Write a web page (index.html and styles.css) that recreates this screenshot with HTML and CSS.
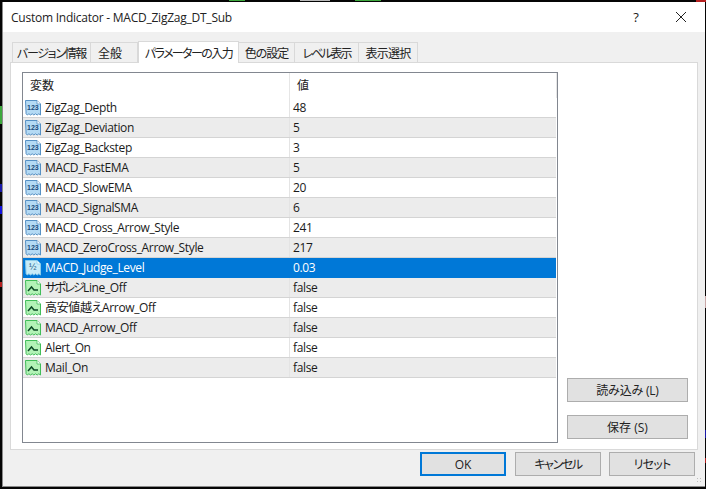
FILE: index.html
```html
<!DOCTYPE html>
<html lang="ja">
<head>
<meta charset="utf-8">
<title>Custom Indicator</title>
<link rel="stylesheet" href="styles.css">
</head>
<body>
<svg class="defs" width="0" height="0">
  <defs>
    <symbol id="doc" viewBox="0 0 16 16">
      <path class="sheet" d="M.5 .5h11.500l3.500 3.500v11l-1.700-1.200-1.600 1.200-1.700-1.200-1.600 1.200-1.700-1.200-1.600 1.200-1.700-1.200-1.600 1.200-1.200-1.200z"/>
      <path class="fold" d="M12 .5v3.500h3.500"/>
    </symbol>
  </defs>
</svg>
<main class="dialog">
  <header class="titlebar">
    <span class="title">Custom Indicator - MACD_ZigZag_DT_Sub</span>
    <span class="help">?</span>
    <svg class="close" viewBox="0 0 12 12" width="12" height="12"><path d="M1 1l10 10M11 1L1 11" stroke="#222" stroke-width="1" fill="none"/></svg>
  </header>
  <div class="body">
    <nav class="tabs">
      <span class="tab t1">バージョン情報</span>
      <span class="tab t2">全般</span>
      <span class="tab t3 active">パラメーターの入力</span>
      <span class="tab t4">色の設定</span>
      <span class="tab t5">レベル表示</span>
      <span class="tab t6">表示選択</span>
    </nav>
    <section class="panel">
      <div class="list">
        <div class="row head"><span class="c1">変数</span><span class="c2">値</span></div>
        <div class="row"><span class="c1"><svg class="ic num"><use href="#doc"/></svg><b class="tag">123</b>ZigZag_Depth</span><span class="c2">48</span></div>
        <div class="row alt"><span class="c1"><svg class="ic num"><use href="#doc"/></svg><b class="tag">123</b>ZigZag_Deviation</span><span class="c2">5</span></div>
        <div class="row"><span class="c1"><svg class="ic num"><use href="#doc"/></svg><b class="tag">123</b>ZigZag_Backstep</span><span class="c2">3</span></div>
        <div class="row alt"><span class="c1"><svg class="ic num"><use href="#doc"/></svg><b class="tag">123</b>MACD_FastEMA</span><span class="c2">5</span></div>
        <div class="row"><span class="c1"><svg class="ic num"><use href="#doc"/></svg><b class="tag">123</b>MACD_SlowEMA</span><span class="c2">20</span></div>
        <div class="row alt"><span class="c1"><svg class="ic num"><use href="#doc"/></svg><b class="tag">123</b>MACD_SignalSMA</span><span class="c2">6</span></div>
        <div class="row"><span class="c1"><svg class="ic num"><use href="#doc"/></svg><b class="tag">123</b>MACD_Cross_Arrow_Style</span><span class="c2">241</span></div>
        <div class="row alt"><span class="c1"><svg class="ic num"><use href="#doc"/></svg><b class="tag">123</b>MACD_ZeroCross_Arrow_Style</span><span class="c2">217</span></div>
        <div class="row sel"><span class="c1"><svg class="ic dbl"><use href="#doc"/></svg><b class="tag half">½</b>MACD_Judge_Level</span><span class="c2">0.03</span></div>
        <div class="row alt"><span class="c1"><svg class="ic bool" viewBox="0 0 16 16"><use href="#doc"/><path class="tick" d="M3 11l3.500-4 2.500 3h4"/></svg><span class="kana">サポレジ</span>Line_Off</span><span class="c2">false</span></div>
        <div class="row"><span class="c1"><svg class="ic bool" viewBox="0 0 16 16"><use href="#doc"/><path class="tick" d="M3 11l3.500-4 2.500 3h4"/></svg>高安値越えArrow_Off</span><span class="c2">false</span></div>
        <div class="row alt"><span class="c1"><svg class="ic bool" viewBox="0 0 16 16"><use href="#doc"/><path class="tick" d="M3 11l3.500-4 2.500 3h4"/></svg>MACD_Arrow_Off</span><span class="c2">false</span></div>
        <div class="row"><span class="c1"><svg class="ic bool" viewBox="0 0 16 16"><use href="#doc"/><path class="tick" d="M3 11l3.500-4 2.500 3h4"/></svg>Alert_On</span><span class="c2">false</span></div>
        <div class="row alt"><span class="c1"><svg class="ic bool" viewBox="0 0 16 16"><use href="#doc"/><path class="tick" d="M3 11l3.500-4 2.500 3h4"/></svg>Mail_On</span><span class="c2">false</span></div>
      </div>
      <div class="side">
        <button class="btn side-btn load">読み込み (L)</button>
        <button class="btn side-btn">保存 (S)</button>
      </div>
    </section>
    <footer class="actions">
      <button class="btn foot primary">OK</button>
      <button class="btn foot cancel">キャンセル</button>
      <button class="btn foot reset">リセット</button>
    </footer>
    <span class="grip"></span>
  </div>
</main>
</body>
</html>
```

FILE: styles.css
```css
* { box-sizing: border-box; }
html, body { margin: 0; height: 100%; }
body {
  width: 706px;
  height: 489px;
  overflow: hidden;
  background-color: #050505;
  background-repeat: no-repeat;
  background-image:
    linear-gradient(#3da83d, #3da83d), linear-gradient(#3da83d, #3da83d),
    linear-gradient(#3da83d, #3da83d), linear-gradient(#b9b9b9, #b9b9b9),
    linear-gradient(#b52020, #b52020), linear-gradient(#1a1aa8, #1a1aa8),
    linear-gradient(#1414e0, #1414e0), linear-gradient(#b52020, #b52020),
    linear-gradient(#c9a8a8, #c9a8a8), linear-gradient(#1a1aa8, #1a1aa8),
    linear-gradient(#b52020, #b52020);
  background-size:
    16px 1px, 26px 1px, 2px 18px, 30px 1px,
    10px 2px, 2px 8px,
    2px 8px, 2px 5px,
    1px 12px, 1px 8px, 1px 5px;
  background-position:
    229px 0, 355px 0, 0 106px, 300px 0,
    696px 0, 0 184px,
    0 206px, 0 282px,
    705px 296px, 705px 430px, 705px 458px;
  padding: 2px 1px 2px 2px;
  font-family: "Open Sans", "Noto Sans CJK JP", sans-serif;
  font-feature-settings: "palt";
  font-size: 12px;
  color: #1a1a1a;
}
.defs { position: absolute; }
.dialog {
  width: 703px;
  height: 485px;
  background: #f0f0f0;
  border-left: 1px solid #8a8a8a;
  border-bottom: 1px solid #8a8a8a;
  display: flex;
  flex-direction: column;
}
.titlebar {
  height: 30px;
  flex: none;
  background: #fff;
  display: flex;
  align-items: center;
  padding-left: 8px;
}
.title { font-size: 12px; flex: 1; color: #222; letter-spacing: -0.24px; }
.help { font-size: 13px; width: 12px; margin-right: 33px; text-align: center; }
.close { margin-right: 18px; }
.body { flex: 1; display: flex; flex-direction: column; padding: 8px 0 0 7px; position: relative; }
.tabs { display: flex; height: 22px; align-items: flex-end; padding-left: 2px; flex: none; }
.tab {
  height: 20px;
  background: #f0f0f0;
  border: 1px solid #d9d9d9;
  border-bottom: 0;
  border-left: 0;
  display: flex;
  align-items: center;
  justify-content: center;
  font-size: 12px;
  color: #222;
  white-space: nowrap;
}
.t1 { width: 79px; border-left: 1px solid #d9d9d9; letter-spacing: -1.3px; }
.t2 { width: 47px; padding-right: 8px; }
.t3 { width: 101px; letter-spacing: -1.6px; }
.t4 { width: 56px; letter-spacing: -1px; }
.t5 { width: 64px; letter-spacing: -2px; }
.t6 { width: 59px; letter-spacing: -0.7px; }
.tab.active { height: 22px; background: #fff; margin-bottom: -1px; z-index: 1; border-left: 1px solid #d9d9d9; }
.panel {
  width: 688px;
  height: 388px;
  background: #fff;
  border: 1px solid #d9d9d9;
  padding: 9px 9px 6px 11px;
  display: flex;
  flex: none;
}
.list {
  width: 536px;
  height: 371px;
  border: 1px solid #828790;
  background: #fff;
  flex: none;
  overflow: hidden;
}
.row {
  display: flex;
  height: 20px;
  line-height: 19px;
  border-bottom: 1px solid #d4d4d4;
  white-space: nowrap;
  letter-spacing: -0.36px;
}
.kana { letter-spacing: -1.8px; }
.row.alt { background: #ececec; }
.row.head { height: 25px; line-height: 25px; border-bottom: 0; letter-spacing: 0; }
.head .c1 { padding-left: 7px; }
.head .c1, .head .c2 { border-right: 1px solid #e6e6e6; }
.head .c2 { width: 267px; padding-left: 7px; flex: none; }
.c1 { width: 267px; flex: none; padding-left: 22px; position: relative; }
.c2 { flex: 1; padding-left: 3px; }
.row:not(.head) { margin-right: 1px; }
.row:not(.head) .c1 { box-shadow: inset -1px 0 0 #e4e4e4; }
.row.sel { background: #0078d7; color: #fff; border-bottom-color: #0078d7; }
.row.sel .c1 { box-shadow: none; }
.ic {
  position: absolute;
  left: 2px;
  top: 2px;
  width: 16px;
  height: 16px;
}
.sheet { fill: var(--body); stroke: var(--edge); stroke-width: 1; }
.fold { fill: #fff; stroke: var(--edge); stroke-width: .8; }
.num { --body: #b4daf4; --edge: #5590c4; }
.dbl { --body: #c8ecf8; --edge: #8ccdea; }
.bool { --body: #b2f2b6; --edge: #40bd58; }
.tick { fill: none; stroke: #0c4a26; stroke-width: 1.500; }
.tag {
  position: absolute;
  left: 4px;
  top: 6px;
  font-family: "Liberation Sans", sans-serif;
  font-size: 7px;
  line-height: 8px;
  font-weight: 700;
  letter-spacing: 0;
  color: #174a7c;
}
.tag.half { font-size: 9px; left: 6px; top: 5px; font-weight: 400; color: #245b85; }
.side {
  flex: 1;
  display: flex;
  flex-direction: column;
  align-items: flex-end;
  gap: 13px;
  padding-top: 306px;
}
.btn {
  font-family: "Open Sans", "Noto Sans CJK JP", sans-serif;
  font-feature-settings: "palt";
  font-size: 12px;
  color: #222;
  background: #e1e1e1;
  border: 1px solid #adadad;
  padding: 0;
  border-radius: 0;
}
.side-btn { width: 121px; height: 24px; }
.load { letter-spacing: -0.2px; }
.actions {
  display: flex;
  justify-content: flex-end;
  gap: 8px;
  padding: 2px 10px 0 0;
}
.foot { width: 86px; height: 24px; }
.cancel { letter-spacing: -1.4px; }
.reset { letter-spacing: -0.8px; }
.primary { border: 2px solid #0078d7; margin-right: 1px; }
.grip {
  position: absolute;
  right: 2px;
  bottom: 2px;
  width: 7px;
  height: 7px;
  background-image: radial-gradient(#bdbdbd 0.8px, transparent 1px);
  background-size: 3px 3px;
}
```
